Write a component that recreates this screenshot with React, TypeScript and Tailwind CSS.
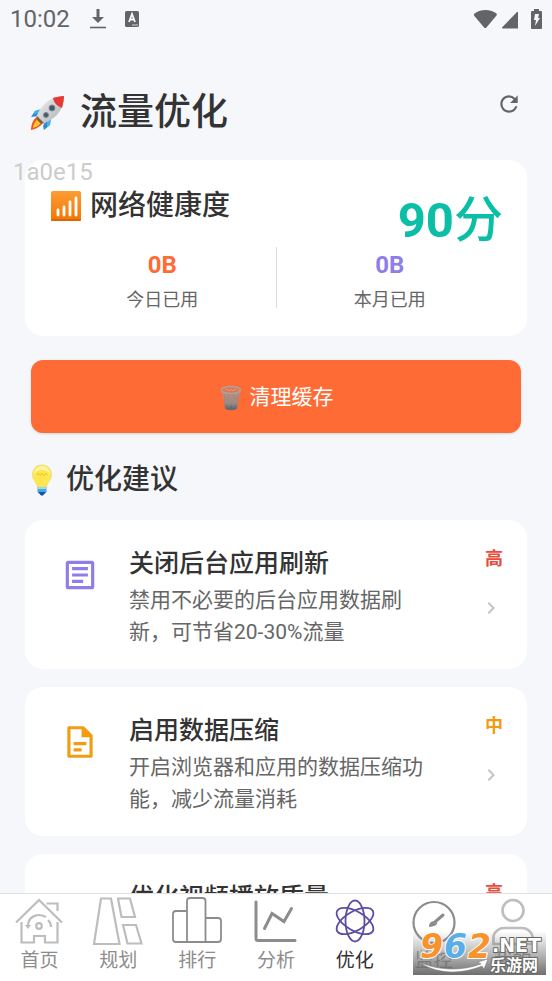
import type { ReactNode } from 'react';
import { MdChevronRight, MdRefresh } from 'react-icons/md';

type Tip = {
  title: string;
  text?: string;
  level: string;
  levelClass: string;
  icon?: ReactNode;
};

const RocketIcon = () => (
  <svg className="size-9" viewBox="0 0 36 36" aria-hidden="true">
    <defs>
      <linearGradient id="hull" x1="0" y1="0" x2="1" y2="1">
        <stop offset="0" stopColor="#f4f4f4" />
        <stop offset="1" stopColor="#a9adb0" />
      </linearGradient>
    </defs>
    <path d="M12 14 5 16 1 22l8-1zM15 27l6-5-1 8-6 5-1-4z" fill="#2a8fd0" />
    <path d="M12 14 5 16 3 19l8-1zM21 22l-1 8-3 2 0-6z" fill="#45b0ea" />
    <path d="M7 22c-4 2-6 8-6 13 5-1 10-4 12-7z" fill="#f4511e" />
    <path d="M8 24c-3 2-5 6-5 9 4-1 7-3 8-6z" fill="#ffca28" />
    <path d="M34 1C23 1 13 7 7 20l-1 4 5 5 4-1C28 22 34 13 34 1z" fill="url(#hull)" />
    <path d="M34 1c-4 0-8 1-11 2 1 5 4 8 9 10 1-4 2-8 2-12z" fill="#e53935" />
    <path d="m7 21 7 7-3 1-5-5z" fill="#8d5a3c" />
    <circle cx="22" cy="13" r="3" fill="#455a64" stroke="#7b8b93" strokeWidth="1" />
    <circle cx="16" cy="20" r="2.500" fill="#455a64" stroke="#7b8b93" strokeWidth="1" />
  </svg>
);

const SignalIcon = () => (
  <svg className="size-8" viewBox="0 0 32 32" aria-hidden="true">
    <defs>
      <linearGradient id="signal" x1="0" y1="0" x2="0" y2="1">
        <stop offset="0" stopColor="#fb9d35" />
        <stop offset="1" stopColor="#f57500" />
      </linearGradient>
    </defs>
    <rect x="1" y="1" width="30" height="30" rx="2" fill="url(#signal)" />
    <path d="M1 29h30v1a1 1 0 0 1-1 1H2a1 1 0 0 1-1-1z" fill="#d9660a" />
    <path d="M8 20v5M14 17v8M20 12v13M26 8v17" stroke="#fff" strokeWidth="2.800" strokeLinecap="round" />
  </svg>
);

const TrashIcon = () => (
  <svg className="h-7 w-6" viewBox="0 0 24 28" aria-hidden="true">
    <defs>
      <linearGradient id="bin" x1="0" y1="0" x2="0" y2="1">
        <stop offset="0" stopColor="#c98c78" />
        <stop offset=".65" stopColor="#a58a82" />
        <stop offset=".85" stopColor="#5d6b73" />
      </linearGradient>
    </defs>
    <path d="M2.500 6h19l-3.500 18c-.5 3-11.500 3-12 0z" fill="url(#bin)" />
    <path d="m5 9 2 15M9 10l1 14M15 10l-1 14M19 9l-2 15M5 13l11 10M19 13 8 23M11 9l8 8M13 9l-8 8" stroke="#8f8a86" strokeWidth=".6" fill="none" />
    <ellipse cx="12" cy="6" rx="9.500" ry="3.500" fill="#e4744a" stroke="#aaa5a1" strokeWidth="1.500" />
    <path d="m6 6 2-1 2 2 2-2 2 2 2-2 2 1" stroke="#c9a294" fill="none" />
  </svg>
);

const BulbIcon = () => (
  <svg className="h-8 w-[22px]" viewBox="0 0 22 32" aria-hidden="true">
    <path d="M11 1C5 1 1.500 5 1.500 11c0 5 4 7 5 12h9c1-5 5-7 5-12C20.500 5 17 1 11 1z" fill="#fde74f" stroke="#e8d66a" strokeWidth=".6" />
    <path d="M11 2c5 0 8 4 8 8-2-3-5-4-8-4s-6 1-8 4c0-4 3-8 8-8z" fill="#fff3a0" />
    <path d="m6 11 1-2 2 3 2-3 2 3 2-3 1 2" stroke="#efc928" fill="none" />
    <path d="M6.500 23h9v5l-2 2-1 1h-3l-1-1-2-2z" fill="#4ba3e3" />
    <path d="M6.500 23h9v2h-9z" fill="#a5d5f5" />
    <path d="M7 28h8l-2 2-1 1.500h-2L9 30z" fill="#1258a8" />
  </svg>
);

const ArticleIcon = () => (
  <svg className="size-[38px] text-[#8f7eea]" viewBox="0 0 24 24" fill="none" stroke="currentColor" strokeWidth="2" aria-hidden="true">
    <rect x="4" y="4" width="16" height="16" rx=".6" />
    <path d="M7 8h10M7 12h10M7 16h7" />
  </svg>
);

const FileIcon = () => (
  <svg className="size-[38px] text-[#f39c12]" viewBox="0 0 24 24" fill="none" stroke="currentColor" strokeWidth="2" aria-hidden="true">
    <path d="M5 3h9l5 5v13H5z" strokeLinejoin="round" />
    <path d="M13 3h1l5 5v1h-6z" fill="currentColor" stroke="none" />
    <path d="M8 13h8M8 17h5" />
  </svg>
);

const TIPS: Tip[] = [
  {
    title: '关闭后台应用刷新',
    text: '禁用不必要的后台应用数据刷新，可节省20-30%流量',
    level: '高',
    levelClass: 'text-[#e74c3c]',
    icon: <ArticleIcon />,
  },
  {
    title: '启用数据压缩',
    text: '开启浏览器和应用的数据压缩功能，减少流量消耗',
    level: '中',
    levelClass: 'text-[#f39c12]',
    icon: <FileIcon />,
  },
  {
    title: '优化视频播放质量',
    level: '高',
    levelClass: 'text-[#e74c3c]',
  },
];

const TABS = [
  {
    label: '首页',
    color: 'text-[#bdbdbd]',
    icon: (
      <g strokeWidth="2.200">
        <path d="M1 25.500 24 3l23 22.500M6.500 25v20.500H19V39h11v6.500h12.500V25M31.500 6.500h11V14" />
        <path d="M13 29c0-7 5-11 11-11 3 0 5 1 7 2M33 23c2 2 3 4 3 7" />
        <path d="m10 28 3 4 3-4z" fill="currentColor" stroke="none" />
        <circle cx="24" cy="29" r="2.800" />
      </g>
    ),
  },
  {
    label: '规划',
    color: 'text-[#bdbdbd]',
    icon: (
      <g strokeWidth="2.200">
        <path d="M7 1.500h10L25.500 47H0zM24 1.500h12L41 20H27.500zM29 28h13l5.500 18.500h-14z" />
      </g>
    ),
  },
  {
    label: '排行',
    color: 'text-[#8c8c8c]',
    icon: (
      <g strokeWidth="1.800">
        <path d="M14 45H2.500A3 3 0 0 1 0 42V17a3 3 0 0 1 3-3h11M32.500 21H45a3 3 0 0 1 3 3v18a3 3 0 0 1-3 3H14V4a3 3 0 0 1 3-3h12.500a3 3 0 0 1 3 3v41" />
      </g>
    ),
  },
  {
    label: '分析',
    color: 'text-[#8c8c8c]',
    icon: (
      <g strokeWidth="3" strokeLinecap="round">
        <path d="M4 5v36.500a2 2 0 0 0 2 2h37M12.500 31.500 20 16.500l12 8 7.500-13" />
      </g>
    ),
  },
  {
    label: '优化',
    color: 'text-[#5c4da3]',
    icon: (
      <g strokeWidth="1.800">
        <ellipse cx="24" cy="24" rx="9.500" ry="20.500" />
        <ellipse cx="24" cy="24" rx="9.500" ry="20.500" transform="rotate(60 24 24)" />
        <ellipse cx="24" cy="24" rx="9.500" ry="20.500" transform="rotate(-60 24 24)" />
      </g>
    ),
  },
  {
    label: '监控',
    color: 'text-[#8c8c8c]',
    icon: (
      <g strokeWidth="2.200">
        <circle cx="24" cy="25.500" r="20.500" />
        <path d="m25 25 8-7" strokeWidth="3" strokeLinecap="round" />
        <path d="M19 30c0-4 2-6 6-6l2 2c0 3-3 3-8 4z" fill="currentColor" stroke="none" />
      </g>
    ),
  },
  {
    label: '我的',
    color: 'text-[#bdbdbd]',
    icon: (
      <g strokeWidth="2.600">
        <circle cx="24" cy="13.500" r="10.500" />
        <path d="M4.500 47v-8a11 11 0 0 1 11-8h17a11 11 0 0 1 11 8v8z" />
      </g>
    ),
  },
];

function StatusBar() {
  return (
    <div className="flex h-[38px] items-center justify-between pr-[9px] pl-[10px] text-[#636467]">
      <div className="flex items-center">
        <span className="text-2xl">10:02</span>
        <svg className="ml-5 h-6 w-4" viewBox="0 0 16 24" fill="none" stroke="currentColor" aria-hidden="true">
          <path d="M8 2v9" strokeWidth="3" />
          <path d="M2 10h12l-6 6z" fill="currentColor" stroke="none" />
          <path d="M0 20.500h16" strokeWidth="1.600" />
        </svg>
        <svg className="ml-[18px] h-4 w-4" viewBox="0 0 16 16" aria-hidden="true">
          <rect x="1" width="14" height="16" rx="1.500" fill="currentColor" />
          <path d="m5 11 3-8 3 8M6 8.500h4" fill="none" stroke="#f5f7fb" strokeWidth="1.800" />
          <path d="M8 14h6" stroke="#d5d6da" strokeWidth="1" />
        </svg>
      </div>
      <svg className="h-6 w-[70px]" viewBox="0 0 70 24" fill="currentColor" aria-hidden="true">
        <path d="M1 7c6-5.500 17-5.500 23 0l-.5 1.500L13 21h-1.500L1 8.500zM45 5v16.500H29.500q-1.200-.3 0-1.500L44 5q1-.7 1 0z" />
        <path d="M61 2h5v2h2q1 0 1 1v16q0 1-1 1h-9q-1 0-1-1V5q0-1 1-1h2z" />
        <path d="M62 7h4l-1 4h2l-5 8 1-6h-2z" fill="#f5f7fb" />
      </svg>
    </div>
  );
}

function Usage({ value, label, className }: { value: string; label: string; className: string }) {
  return (
    <div className="flex-1 text-center">
      <p className={`text-2xl leading-9 font-bold ${className}`}>{value}</p>
      <p className="mt-0.5 text-lg leading-[29px] text-[#666]">{label}</p>
    </div>
  );
}

function HealthCard() {
  return (
    <section className="relative mx-[25px] rounded-[18px] bg-white px-6 pt-6 pb-[22px]">
      <span className="absolute -top-0.5 -left-3 text-2xl leading-7 text-[#ccc]">1a0e15</span>
      <div className="flex items-start justify-between">
        <h2 className="flex items-center gap-2 pl-px text-[28px] leading-[44px] font-medium">
          <SignalIcon />
          网络健康度
        </h2>
        <p className="mt-[10px] text-[49px] leading-[53px] font-bold text-[#0abfa5]">
          90<span className="font-medium">分</span>
        </p>
      </div>
      <div className="flex items-start">
        <Usage value="0B" label="今日已用" className="text-[#ff6b35]" />
        <div className="h-[61px] w-px bg-[#ddd]" />
        <Usage value="0B" label="本月已用" className="text-[#8f7eea]" />
      </div>
    </section>
  );
}

function TipCard({ tip }: { tip: Tip }) {
  return (
    <li className="flex rounded-[18px] bg-white pt-[26px] pr-6 pb-[21px] pl-9">
      <div className="flex w-[38px] shrink-0 pt-[10px]">{tip.icon}</div>
      <div className="ml-[30px] flex-1">
        <h3 className="text-[25px] leading-9 font-medium">{tip.title}</h3>
        {tip.text && <p className="mt-0.5 text-[21px] leading-8 text-[#666]">{tip.text}</p>}
      </div>
      <div className="ml-9 flex w-9 shrink-0 flex-col items-end">
        <span className={`text-lg leading-[26px] font-bold ${tip.levelClass}`}>{tip.level}</span>
        <MdChevronRight className="mt-6 size-6 text-[#c4c4c4]" />
      </div>
    </li>
  );
}

function TabBar() {
  return (
    <nav className="flex h-[88px] shrink-0 border-t border-[#e0e0e0] bg-white">
      {TABS.map((tab) => (
        <button key={tab.label} type="button" className="flex flex-1 flex-col items-center pt-[3px]">
          <svg className={`size-12 overflow-visible ${tab.color}`} viewBox="0 0 48 48" fill="none" stroke="currentColor" aria-hidden="true">
            {tab.icon}
          </svg>
          <span className={`text-[19px] leading-[31px] ${tab.label === '优化' ? 'text-[#333]' : 'text-[#8c8c8c]'}`}>{tab.label}</span>
        </button>
      ))}
    </nav>
  );
}

function SiteBadge() {
  return (
    <div className="pointer-events-none absolute right-[6px] bottom-[6px] h-11 w-[133px]">
      <svg className="h-full w-full overflow-visible" viewBox="0 0 133 44" aria-hidden="true">
        <defs>
          <linearGradient id="shade" x1="0" y1="0" x2="0" y2="1">
            <stop offset="0" stopColor="#777" stopOpacity="0" />
            <stop offset=".5" stopColor="#777" stopOpacity=".5" />
            <stop offset="1" stopColor="#666" stopOpacity=".95" />
          </linearGradient>
        </defs>
        <rect width="133" height="44" fill="url(#shade)" />
        <path d="M6 31c20 9 43 9 62 2l-3-2 10-3-4 10-2-3c-22 9-46 8-63-4z" fill="#fff" stroke="#777" strokeWidth=".5" />
        <g className="font-['DejaVu_Sans'] font-bold italic" paintOrder="stroke" stroke="#fff" strokeWidth="2" strokeLinejoin="round" fontSize="33">
          <text x="7" y="27" fill="#f7922c">9</text>
          <text x="31" y="27" fill="#59aee8">6</text>
          <text x="55" y="27" fill="#f7922c">2</text>
        </g>
        <g paintOrder="stroke" fill="#fff" stroke="#666" strokeWidth="2" strokeLinejoin="round">
          <text className="font-['DejaVu_Sans'] font-bold" x="79" y="21" fontSize="19">.NET</text>
          <text className="font-['Noto_Sans_CJK_SC',sans-serif] font-bold" x="77" y="40" fontSize="16">乐游网</text>
        </g>
      </svg>
    </div>
  );
}

export default function App() {
  return (
    <div className="relative flex h-screen flex-col bg-[#f5f7fb] font-[Roboto,'Noto_Sans_CJK_SC',sans-serif] text-[#333]">
      <main className="min-h-0 flex-1 overflow-hidden">
        <StatusBar />
        <header className="flex items-start justify-between pt-12 pr-[30px] pb-5 pl-[30px]">
          <h1 className="flex items-center gap-[14px] text-[37px] leading-[54px] font-medium">
            <RocketIcon />
            流量优化
          </h1>
          <button type="button" aria-label="刷新" className="mt-[5px] text-[#636467]">
            <MdRefresh className="size-[26px]" />
          </button>
        </header>

        <HealthCard />

        <div className="px-[31px] pt-6">
          <button
            type="button"
            className="flex h-[73px] w-full items-center justify-center gap-[7px] rounded-xl bg-[#ff6b35] pt-0.5 text-[21px] text-white shadow-sm"
          >
            <TrashIcon />
            清理缓存
          </button>
          <h2 className="mt-[27px] flex items-center gap-[13px] text-[28px] leading-10 font-medium">
            <BulbIcon />
            优化建议
          </h2>
        </div>

        <ul className="mx-[25px] mt-5 flex flex-col gap-[18px]">
          {TIPS.map((tip) => (
            <TipCard key={tip.title} tip={tip} />
          ))}
        </ul>
      </main>
      <TabBar />
      <SiteBadge />
    </div>
  );
}
